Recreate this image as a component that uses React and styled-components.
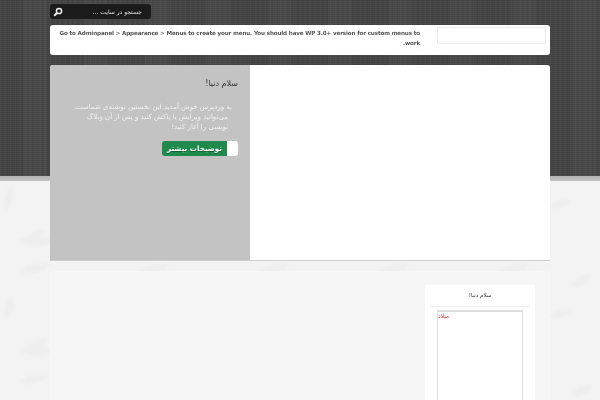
import React from "react";
import styled, { createGlobalStyle } from "styled-components";

const Global = createGlobalStyle`
  html, body { margin: 0; padding: 0; height: 400px; overflow: hidden; }
  body { font-family: "DejaVu Sans", "Noto Sans", sans-serif; background: #f3f3f3; }
`;

const Page = styled.div`
  width: 600px;
  height: 400px;
  overflow: hidden;
  position: relative;
  background: linear-gradient(#464646 0, #464646 176px, #b4b4b4 176px, #c4c4c4 181px, #f3f3f3 181px);
`;

const Grain = styled.div`
  position: absolute;
  inset: 0 0 auto 0;
  height: 176px;
  background:
    repeating-linear-gradient(0deg, #ffffff05 0 1px, #00000008 1px 2px),
    repeating-linear-gradient(90deg, #ffffff06 0 1px, #00000000 1px 2px, #0000000d 2px 3px, #00000000 3px 5px),
    repeating-linear-gradient(90deg, #00000009 0 23px, #ffffff04 23px 47px, #00000006 47px 61px);
`;

const Floral = styled.svg`
  position: absolute;
  left: 0;
  top: 181px;
  width: 600px;
  height: 219px;
  filter: blur(1.2px);
`;

const Wrap = styled.div`
  position: relative;
  width: 500px;
  margin: 0 auto;
  padding-top: 4px;
  display: flex;
  flex-direction: column;
  filter: blur(0.3px);
`;

const Search = styled.form`
  width: 101px;
  height: 15px;
  margin: 0;
  background: #1b1b1b;
  border-radius: 3px;
  display: flex;
  align-items: center;
  justify-content: space-between;
  padding: 0 9px 0 3px;
  box-sizing: border-box;
  color: #e4e4e4;
  font-size: 6px;
  direction: rtl;
`;

const SearchIcon = styled.svg`
  width: 10px;
  height: 10px;
  display: block;
`;

const Nav = styled.nav`
  margin-top: 6px;
  height: 30px;
  background: #fff;
  border-radius: 3px;
  display: flex;
  direction: rtl;
  justify-content: flex-start;
  box-sizing: border-box;
  padding: 2px 4px 0 0;
  gap: 17px;
`;

const HeaderBox = styled.div`
  width: 109px;
  height: 17px;
  border: 1px solid #ececec;
  box-sizing: border-box;
  flex: none;
`;

const NavText = styled.div`
  width: 364px;
  font-size: 5.6px;
  letter-spacing: -0.13px;
  font-weight: 700;
  line-height: 10px;
  color: #555;
  padding-top: 1px;
`;

const Slider = styled.section`
  margin-top: 10px;
  height: 195px;
  background: #fff;
  border-radius: 3px 3px 0 0;
  display: flex;
  direction: rtl;
  overflow: hidden;
  box-shadow: 0 1px 0 #cfcfcf;
`;

const Intro = styled.div`
  width: 200px;
  background: #c3c3c3;
  box-sizing: border-box;
  padding: 11px 12px 0 12px;
  margin-right: 300px;
  display: flex;
  flex-direction: column;
  align-items: flex-start;
`;

const IntroTitle = styled.h2`
  margin: 0;
  font: 400 8px/16px "DejaVu Sans", sans-serif;
  color: #333;
`;

const IntroText = styled.p`
  margin: 10px 10px 0 0;
  width: 160px;
  font-size: 7px;
  line-height: 10px;
  color: #f1f1f1;
  text-align: right;
  text-indent: -4px;
`;

const More = styled.a`
  margin-top: 9px;
  width: 76px;
  height: 15px;
  display: flex;
  border-radius: 3px;
  overflow: hidden;
`;

const MoreCap = styled.span`
  width: 11px;
  background: #fff;
`;

const MoreLabel = styled.span`
  flex: 1;
  background: #1f8a4c;
  color: #fff;
  font-size: 7.2px;
  font-weight: 700;
  line-height: 15px;
  text-align: center;
  white-space: nowrap;
  text-shadow: 0 1px 0 #0d5c2e;
`;

const Content = styled.main`
  margin-top: 11px;
  height: 140px;
  background: #f6f6f6;
  border-radius: 3px 3px 0 0;
  box-sizing: border-box;
  padding: 14px 15px 0 0;
  display: flex;
  direction: rtl;
`;

const Widget = styled.aside`
  width: 110px;
  height: 126px;
  background: #fff;
  border-radius: 2px 2px 0 0;
  box-sizing: border-box;
  padding: 0 5px;
`;

const WidgetTitle = styled.h3`
  margin: 0;
  height: 21px;
  border-bottom: 1px solid #f0f0f0;
  font: 400 5.5px/21px "DejaVu Sans", sans-serif;
  color: #333;
  text-align: center;
`;

const WidgetBox = styled.div`
  margin: 3px 7px 0;
  height: 100px;
  border: 1px solid #dedede;
  border-top-width: 2px;
  font-size: 6px;
  line-height: 8px;
  color: #e04040;
  text-align: left;
  direction: ltr;
`;

const leaf = "c5 -10 14 -13 21 -11 c-3 8 -11 14 -21 11z";

export default function App() {
  return (
    <Page>
      <Global />
      <Grain />
      <Floral viewBox="0 0 600 219" aria-hidden="true">
        <defs>
          <pattern id="sprig" width="120" height="110" patternUnits="userSpaceOnUse" x="-5" y="0">
            <g fill="#eeeeee">
              <path d={"M30 60 " + leaf} />
              <path d={"M62 46 c-5 -10 -4 -26 4 -34 c5 10 4 26 -4 34z"} />
              <path d={"M58 60 c-10 -6 -24 -6 -34 -1 c9 8 24 8 34 1z"} />
              <path d={"M54 84 c-10 -3 -22 0 -30 7 c11 4 22 1 30 -7z"} />
              <path d={"M96 105 " + leaf} />
              <path d={"M10 30 c-3 -8 0 -20 7 -25 c4 8 1 20 -7 25z"} />
              <path d={"M96 20 c-8 -3 -16 0 -22 5 c8 4 16 2 22 -5z"} />
            </g>
          </pattern>
        </defs>
        <rect width="600" height="219" fill="url(#sprig)" />
      </Floral>
      <Wrap>
        <Search>
          <span>جستجو در سایت ...</span>
          <SearchIcon viewBox="0 0 10 10" fill="none" stroke="#eee">
            <circle cx="6" cy="4" r="2.6" strokeWidth="1.5" />
            <path d="M4 6 L1.2 8.8" strokeWidth="2" />
          </SearchIcon>
        </Search>
        <Nav>
          <HeaderBox />
          <NavText>Go to Adminpanel &gt; Appearance &gt; Menus to create your menu. You should have WP 3.0+ version for custom menus to work.</NavText>
        </Nav>
        <Slider>
          <Intro>
            <IntroTitle>سلام دنیا!</IntroTitle>
            <IntroText>به وردپرس خوش آمدید.این نخستین نوشته‌ی شماست. می‌توانید ویرایش یا پاکش کنید و پس از آن وبلاگ نویسی را آغاز کنید!</IntroText>
            <More>
              <MoreCap />
              <MoreLabel>توضیحات بیشتر</MoreLabel>
            </More>
          </Intro>
        </Slider>
        <Content>
          <Widget>
            <WidgetTitle>سلام دنیا!</WidgetTitle>
            <WidgetBox>میلاد</WidgetBox>
          </Widget>
        </Content>
      </Wrap>
    </Page>
  );
}
